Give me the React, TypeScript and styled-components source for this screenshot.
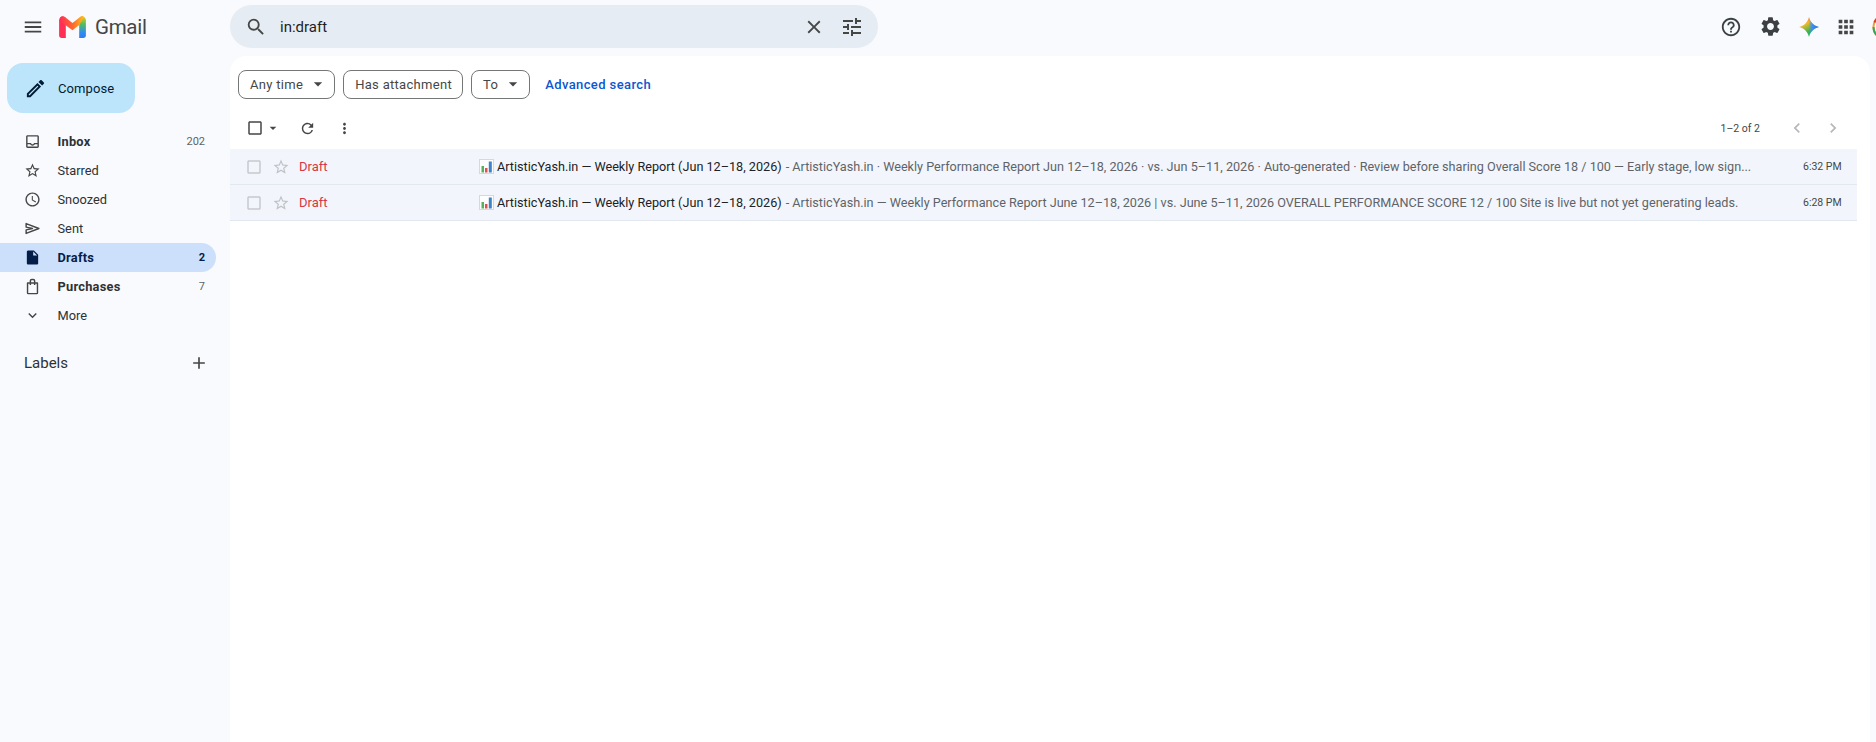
import React from "react";
import styled, { createGlobalStyle } from "styled-components";
import {
  MdMenu,
  MdSearch,
  MdClose,
  MdTune,
  MdHelpOutline,
  MdSettings,
  MdApps,
  MdRefresh,
  MdMoreVert,
  MdChevronLeft,
  MdChevronRight,
  MdArrowDropDown,
  MdCheckBoxOutlineBlank,
  MdStarBorder,
  MdOutlineInbox,
  MdAccessTime,
  MdInsertDriveFile,
  MdExpandMore,
  MdAdd,
  MdOutlineEdit,
} from "react-icons/md";

const GlobalStyle = createGlobalStyle`
  html, body { margin: 0; height: 100%; overflow: hidden; background: #f8fafd; }
  body { font-family: Roboto, "Liberation Sans", sans-serif; color: #1f1f1f; }
  #root { height: 100%; }
`;

function SentIcon() {
  return (
    <svg width="1em" height="1em" viewBox="0 0 24 24" fill="none" stroke="currentColor" strokeWidth="2" strokeLinejoin="round">
      <path d="M3 5 21 12 3 19 3 14 12 12 3 10Z" />
    </svg>
  );
}

function BagIcon() {
  return (
    <svg width="1em" height="1em" viewBox="0 0 24 24" fill="none" stroke="currentColor" strokeWidth="2" strokeLinejoin="round">
      <path d="M5 7H19V21C19 21.6 18.6 22 18 22H6C5.4 22 5 21.6 5 21Z" />
      <path d="M9 10V4C9 3 9.8 2 11 2H13C14.2 2 15 3 15 4V10" />
    </svg>
  );
}

const navItems = [
  { label: "Inbox", count: "202", bold: true, icon: <MdOutlineInbox /> },
  { label: "Starred", icon: <MdStarBorder /> },
  { label: "Snoozed", icon: <MdAccessTime /> },
  { label: "Sent", icon: <SentIcon /> },
  { label: "Drafts", count: "2", bold: true, active: true, icon: <MdInsertDriveFile /> },
  { label: "Purchases", count: "7", bold: true, icon: <BagIcon /> },
  { label: "More", icon: <MdExpandMore /> },
];

const drafts = [
  {
    snippet:
      "ArtisticYash.in · Weekly Performance Report Jun 12–18, 2026 · vs. Jun 5–11, 2026 · Auto-generated · Review before sharing Overall Score 18 / 100 — Early stage, low sign...",
    time: "6:32 PM",
  },
  {
    snippet:
      "ArtisticYash.in — Weekly Performance Report June 12–18, 2026 | vs. June 5–11, 2026 OVERALL PERFORMANCE SCORE 12 / 100 Site is live but not yet generating leads.",
    time: "6:28 PM",
  },
];

function GmailLogo() {
  return (
    <svg width="27" height="22" viewBox="0 0 28 23">
      <defs>
        <linearGradient id="mid" x1="0" y1="0" x2="1" y2="0">
          <stop offset="0" stopColor="#ff2f55" />
          <stop offset="0.55" stopColor="#ff6a2b" />
          <stop offset="1" stopColor="#ffc21a" />
        </linearGradient>
        <linearGradient id="right" x1="0" y1="0" x2="0" y2="1">
          <stop offset="0" stopColor="#f7c61d" />
          <stop offset="0.35" stopColor="#4fc05a" />
          <stop offset="0.75" stopColor="#2f8cf0" />
          <stop offset="1" stopColor="#2f7cf0" />
        </linearGradient>
      </defs>
      <path d="M0 4.5C0 1 3.6-.8 6 1.3L7 2.2V23H2.6C1.1 23 0 21.9 0 20.4Z" fill="#ff2f55" />
      <path d="M21 2.2 22 1.3C24.4-.8 28 1 28 4.5V20.4C28 21.9 26.9 23 25.4 23H21Z" fill="url(#right)" />
      <path d="M1 1.5C2.8-.2 4.8-.2 6.4 1.2L14 7.4 21.6 1.2C23.2-.2 25-.2 26 1L21 9.5 14 15 2.5 6.5Z" fill="url(#mid)" />
    </svg>
  );
}

function SparkIcon() {
  return (
    <svg width="20" height="20" viewBox="0 0 20 20">
      <defs>
        <linearGradient id="sparkA" x1="0" y1="0" x2="0.5" y2="1">
          <stop offset="0" stopColor="#f0483e" />
          <stop offset="0.4" stopColor="#f5b82e" />
          <stop offset="0.8" stopColor="#2fb457" />
        </linearGradient>
        <linearGradient id="sparkB" x1="0.2" y1="0.5" x2="1" y2="0.5">
          <stop offset="0.35" stopColor="#3f8cf5" stopOpacity="0" />
          <stop offset="0.6" stopColor="#3f8cf5" />
          <stop offset="1" stopColor="#2f6df0" />
        </linearGradient>
      </defs>
      <path d="M10 0C11 5 15 9 20 10 15 11 11 15 10 20 9 15 5 11 0 10 5 9 9 5 10 0Z" fill="url(#sparkA)" />
      <path d="M10 0C11 5 15 9 20 10 15 11 11 15 10 20 9 15 5 11 0 10 5 9 9 5 10 0Z" fill="url(#sparkB)" />
    </svg>
  );
}

function ChartIcon() {
  return (
    <svg width="15" height="15" viewBox="0 0 15 15">
      <rect x="0.5" y="0.5" width="14" height="14" fill="#fdfdfd" stroke="#d5d9de" />
      <rect x="2.5" y="7" width="2.5" height="6.5" fill="#57b05c" />
      <rect x="6" y="9" width="2.5" height="4.5" fill="#d9534f" />
      <rect x="9.8" y="2.5" width="3" height="11" fill="#3c83c9" />
    </svg>
  );
}

function Avatar() {
  return (
    <AvatarWrap>
      <svg width="26" height="26" viewBox="0 0 26 26">
        <circle cx="13" cy="13" r="11.5" fill="#fff" stroke="#e8a33a" strokeWidth="2" />
        <path d="M13 1.5A11.5 11.5 0 0 0 2.4 8.5" fill="none" stroke="#d8412f" strokeWidth="2" />
        <path d="M1.5 13A11.5 11.5 0 0 0 9 23.8" fill="none" stroke="#3aa655" strokeWidth="2" />
        <circle cx="13" cy="13" r="8.5" fill="#f7e8d8" />
      </svg>
    </AvatarWrap>
  );
}

export default function App() {
  return (
    <Page>
      <GlobalStyle />
      <Header>
        <Brand>
          <IconSlot size={22} color="#444746">
            <MdMenu />
          </IconSlot>
          <GmailLogo />
          <BrandName>Gmail</BrandName>
        </Brand>
        <SearchBar>
          <IconSlot size={22} color="#444746">
            <MdSearch />
          </IconSlot>
          <SearchText>in:draft</SearchText>
          <ClearIcon size={22} color="#444746">
            <MdClose />
          </ClearIcon>
          <IconSlot size={24} color="#444746">
            <MdTune />
          </IconSlot>
        </SearchBar>
        <HeaderActions>
          <IconSlot size={22} color="#3c4043">
            <MdHelpOutline />
          </IconSlot>
          <IconSlot size={23} color="#3c4043">
            <MdSettings />
          </IconSlot>
          <SparkIcon />
          <AppsIcon size={22} color="#444746">
            <MdApps />
          </AppsIcon>
          <Avatar />
        </HeaderActions>
      </Header>

      <Body>
        <Sidebar>
          <ComposeButton>
            <IconSlot size={23} color="#001d35">
              <MdOutlineEdit />
            </IconSlot>
            Compose
          </ComposeButton>
          <NavList>
            {navItems.map((item) => (
              <NavRow key={item.label} active={item.active} bold={item.bold}>
                <NavIcon active={item.active}>{item.icon}</NavIcon>
                <NavLabel>{item.label}</NavLabel>
                {item.count && <NavCount active={item.active}>{item.count}</NavCount>}
              </NavRow>
            ))}
          </NavList>
          <LabelsHead>
            <span>Labels</span>
            <IconSlot size={20} color="#444746">
              <MdAdd />
            </IconSlot>
          </LabelsHead>
        </Sidebar>

        <Main>
          <FilterBar>
            <Chip>
              Any time
              <IconSlot size={20} color="#444746">
                <MdArrowDropDown />
              </IconSlot>
            </Chip>
            <Chip plain>Has attachment</Chip>
            <Chip>
              To
              <IconSlot size={20} color="#444746">
                <MdArrowDropDown />
              </IconSlot>
            </Chip>
            <AdvancedLink>Advanced search</AdvancedLink>
          </FilterBar>

          <Toolbar>
            <SelectGroup>
              <IconSlot size={18} color="#444746">
                <MdCheckBoxOutlineBlank />
              </IconSlot>
              <IconSlot size={16} color="#444746">
                <MdArrowDropDown />
              </IconSlot>
            </SelectGroup>
            <IconSlot size={17} color="#444746">
              <MdRefresh />
            </IconSlot>
            <IconSlot size={17} color="#444746">
              <MdMoreVert />
            </IconSlot>
            <Pager>
              <PagerText>1–2 of 2</PagerText>
              <IconSlot size={20} color="#b4b7bb">
                <MdChevronLeft />
              </IconSlot>
              <IconSlot size={20} color="#b4b7bb">
                <MdChevronRight />
              </IconSlot>
            </Pager>
          </Toolbar>

          <MailList>
            {drafts.map((mail) => (
              <MailRow key={mail.time}>
                <RowControls>
                  <IconSlot size={18} color="#c6c9cc">
                    <MdCheckBoxOutlineBlank />
                  </IconSlot>
                  <IconSlot size={18} color="#c0c3c6">
                    <MdStarBorder />
                  </IconSlot>
                </RowControls>
                <Sender>Draft</Sender>
                <ChartIcon />
                <Subject>ArtisticYash.in — Weekly Report (Jun 12–18, 2026)</Subject>
                <Snippet>- {mail.snippet}</Snippet>
                <MailTime>{mail.time}</MailTime>
              </MailRow>
            ))}
          </MailList>
        </Main>
      </Body>
    </Page>
  );
}

const Page = styled.div`
  height: 100vh;
  width: 100vw;
  display: flex;
  flex-direction: column;
  overflow: hidden;
`;

const Header = styled.header`
  height: 56px;
  flex: none;
  box-sizing: border-box;
  padding-bottom: 3px;
  display: flex;
  align-items: center;
`;

const IconSlot = styled.span<{ size: number; color: string }>`
  display: inline-flex;
  flex: none;
  font-size: ${(p) => p.size}px;
  color: ${(p) => p.color};
`;

const ClearIcon = styled(IconSlot)`
  margin-right: 2px;
`;

const AppsIcon = styled(IconSlot)`
  margin-left: -1px;
`;

const AvatarWrap = styled.span`
  display: inline-flex;
  flex: none;
  margin-left: -2px;
`;

const Brand = styled.div`
  width: 230px;
  flex: none;
  display: flex;
  align-items: center;
  padding-left: 22px;
  box-sizing: border-box;
  gap: 15px;
`;

const BrandName = styled.span`
  font-size: 20.5px;
  color: #444746;
  margin-left: -6px;
  letter-spacing: -0.3px;
`;

const SearchBar = styled.div`
  width: 648px;
  height: 43px;
  border-radius: 22px;
  background: #e6ecf3;
  display: flex;
  align-items: center;
  padding: 0 14px 0 15px;
  box-sizing: border-box;
  gap: 13px;
`;

const SearchText = styled.span`
  flex: 1;
  font-size: 15px;
  color: #1f1f1f;
`;

const HeaderActions = styled.div`
  margin-left: auto;
  display: flex;
  align-items: center;
  gap: 17px;
  margin-right: -22px;
`;

const Body = styled.div`
  flex: 1;
  display: flex;
  min-height: 0;
`;

const Sidebar = styled.aside`
  width: 230px;
  flex: none;
`;

const ComposeButton = styled.div`
  width: 128px;
  height: 50px;
  margin: 7px 0 0 7px;
  border-radius: 16px;
  background: #bce4fb;
  display: flex;
  align-items: center;
  gap: 11px;
  padding-left: 17px;
  box-sizing: border-box;
  font-size: 13px;
  letter-spacing: 0.1px;
  color: #001d35;
`;

const NavList = styled.nav`
  margin-top: 14px;
`;

const NavRow = styled.div<{ active?: boolean; bold?: boolean }>`
  width: 216px;
  height: 29px;
  box-sizing: border-box;
  display: flex;
  align-items: center;
  padding: 0 11px 0 24px;
  border-radius: 0 15px 15px 0;
  font-size: 12.8px;
  letter-spacing: ${(p) => (p.bold ? 0.25 : 0)}px;
  font-weight: ${(p) => (p.bold ? 700 : 400)};
  color: ${(p) => (p.active ? "#041e49" : "#2f3133")};
  background: ${(p) => (p.active ? "#cce0fb" : "transparent")};
`;

const NavIcon = styled.span<{ active?: boolean }>`
  display: inline-flex;
  width: 33.5px;
  flex: none;
  font-size: 17px;
  color: ${(p) => (p.active ? "#041e49" : "#444746")};
`;

const NavLabel = styled.span`
  flex: 1;
`;

const NavCount = styled.span<{ active?: boolean }>`
  font-size: 11px;
  letter-spacing: 0;
  font-weight: ${(p) => (p.active ? 700 : 400)};
  color: ${(p) => (p.active ? "#041e49" : "#5f6368")};
`;

const LabelsHead = styled.div`
  width: 216px;
  box-sizing: border-box;
  display: flex;
  align-items: center;
  justify-content: space-between;
  padding: 0 7px 0 24px;
  margin-top: 21px;
  height: 24px;
  font-size: 15px;
  color: #2f3133;
`;

const Main = styled.main`
  flex: 1;
  margin-right: 6px;
  background: #fff;
  border-radius: 16px 16px 0 0;
  padding-right: 13px;
  min-width: 0;
`;

const FilterBar = styled.div`
  height: 29px;
  margin-top: 14px;
  padding-left: 8px;
  display: flex;
  align-items: center;
  gap: 8px;
`;

const Chip = styled.div<{ plain?: boolean }>`
  height: 29px;
  box-sizing: border-box;
  display: flex;
  align-items: center;
  gap: 5px;
  padding: 0 ${(p) => (p.plain ? 10 : 6)}px 1px 11px;
  border: 1px solid #747775;
  border-radius: 8px;
  font-size: 13px;
  letter-spacing: 0.3px;
  color: #444746;
`;

const AdvancedLink = styled.span`
  margin-left: 7px;
  font-size: 13px;
  font-weight: 500;
  letter-spacing: 0.4px;
  color: #0b57d0;
  padding-bottom: 1px;
`;

const Toolbar = styled.div`
  height: 36px;
  margin-top: 11px;
  padding-left: 16px;
  display: flex;
  align-items: center;
  gap: 20px;
`;

const SelectGroup = styled.div`
  display: flex;
  align-items: center;
  margin-right: -2px;
  gap: 1px;
`;

const Pager = styled.div`
  margin-left: auto;
  display: flex;
  align-items: center;
  margin-right: 14px;
  gap: 16px;
`;

const PagerText = styled.span`
  font-size: 10.5px;
  color: #444746;
  margin-right: 11px;
`;

const MailList = styled.div`
  margin-top: 3px;
`;

const MailRow = styled.div`
  height: 36px;
  box-sizing: border-box;
  display: flex;
  align-items: center;
  background: #f2f6fc;
  border-bottom: 1px solid #e2e8f0;
  font-size: 12.65px;
`;

const RowControls = styled.div`
  width: 69px;
  flex: none;
  display: flex;
  align-items: center;
  gap: 9px;
  padding-left: 15px;
  box-sizing: border-box;
`;

const Sender = styled.span`
  width: 180px;
  flex: none;
  font-size: 13px;
  color: #d93840;
`;

const Subject = styled.span`
  flex: none;
  margin-left: 3px;
  color: #202124;
`;

const Snippet = styled.span`
  flex: 1;
  min-width: 0;
  margin-left: 4px;
  margin-right: 20px;
  color: #5f6368;
  white-space: nowrap;
`;

const MailTime = styled.span`
  flex: none;
  width: 37px;
  margin-right: 17px;
  font-size: 10.5px;
  color: #444746;
  white-space: nowrap;
`;
